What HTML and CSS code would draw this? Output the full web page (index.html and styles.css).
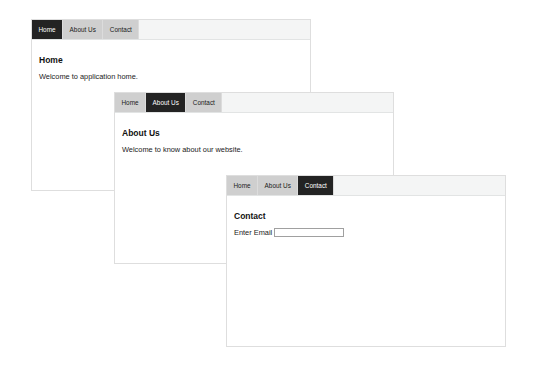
FILE: index.html
```html
<!DOCTYPE html>
<html>
<head>
<meta charset="utf-8">
<link rel="stylesheet" href="styles.css">
</head>
<body>
<div class="desk">
  <div class="window w1">
    <div class="tabs">
      <span class="tab active">Home</span>
      <span class="tab">About Us</span>
      <span class="tab">Contact</span>
    </div>
    <div class="content">
      <h2>Home</h2>
      <p>Welcome to application home.</p>
    </div>
  </div>
  <div class="window w2">
    <div class="tabs">
      <span class="tab">Home</span>
      <span class="tab active">About Us</span>
      <span class="tab">Contact</span>
    </div>
    <div class="content">
      <h2>About Us</h2>
      <p>Welcome to know about our website.</p>
    </div>
  </div>
  <div class="window w3">
    <div class="tabs">
      <span class="tab">Home</span>
      <span class="tab">About Us</span>
      <span class="tab active">Contact</span>
    </div>
    <div class="content">
      <h2>Contact</h2>
      <p class="field">Enter Email <input class="email" type="text"></p>
    </div>
  </div>
</div>
</body>
</html>
```
FILE: styles.css
```css
html, body {
  margin: 0;
  padding: 0;
  background: #fff;
}
body {
  font-family: "Liberation Sans", Arial, sans-serif;
  color: #1a1a1a;
}
.desk {
  position: relative;
  width: 550px;
  height: 367px;
}
.window {
  position: absolute;
  width: 278px;
  height: 170px;
  border: 1px solid #dedede;
  background: #fff;
  display: flex;
  flex-direction: column;
}
.w1 { left: 31px; top: 19px; }
.w2 { left: 114px; top: 92px; }
.w3 { left: 226px; top: 175px; }
.tabs {
  display: flex;
  height: 19px;
  background: #f4f5f5;
  border-bottom: 1px solid #e2e4e4;
}
.tab {
  display: flex;
  align-items: center;
  padding: 0 6.5px;
  font-size: 6.4px;
  color: #1a1a1a;
  background: #cfcfcf;
  border-right: 1px solid #dcdcdc;
}
.tab.active {
  background: #232323;
  color: #fff;
}
.content {
  padding: 0 7px;
}
.content h2 {
  font-size: 8.5px;
  font-weight: bold;
  color: #111;
  margin: 15px 0 0 0;
  line-height: 10px;
}
.content p {
  font-size: 7.4px;
  margin: 7px 0 0 0;
  line-height: 9px;
}
.field {
  display: flex;
  align-items: center;
  gap: 2px;
}
.email {
  width: 68px;
  height: 7px;
  padding: 0;
  margin: 0;
  border: 1px solid #a0a0a0;
  font-size: 6px;
}
```
